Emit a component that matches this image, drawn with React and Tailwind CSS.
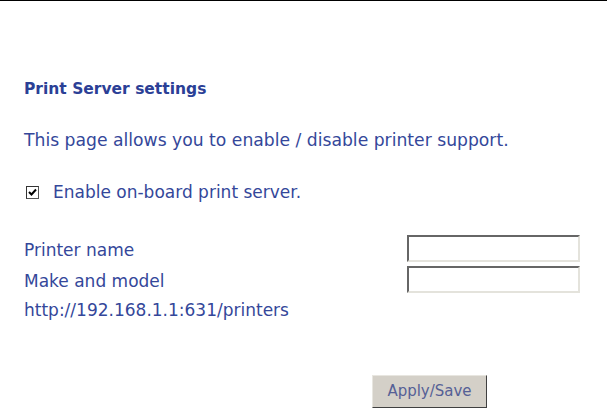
export default function App() {
  return (
    <div
      className="w-[607px] h-[412px] bg-white border-t border-black overflow-hidden text-[#34479a]"
      style={{ fontFamily: '"DejaVu Sans", Verdana, sans-serif' }}
    >
      <div className="pl-[24px] pt-[78px]">
        <h1 className="text-[15.5px] leading-[20px] font-bold text-[#2b4096]">
          Print Server settings
        </h1>

        <p className="mt-[29px] text-[17.2px] leading-[24px]">
          This page allows you to enable / disable printer support.
        </p>

        <label className="mt-[28px] flex items-center gap-[14px] pl-[2px] text-[17px] leading-[24px]">
          <span className="w-[13px] h-[13px] border border-[#555] border-t-[#333] border-l-[#333] bg-white flex items-center justify-center">
            <svg width="9" height="9" viewBox="0 0 9 9">
              <path d="M1 4 L3.5 6.5 L8 1.5" stroke="#000" strokeWidth="2" fill="none" />
            </svg>
          </span>
          Enable on-board print server.
        </label>

        <div className="mt-[31px] grid grid-cols-[383px_173px] gap-y-[4px] text-[17px]">
          <span className="pt-[4px] leading-[23px]">Printer name</span>
          <input className="h-[27px] border-2 border-t-[#666] border-l-[#666] border-b-[#e4e3dc] border-r-[#e4e3dc] bg-white outline-none" />
          <span className="pt-[4px] leading-[23px]">Make and model</span>
          <input className="h-[27px] border-2 border-t-[#666] border-l-[#666] border-b-[#e4e3dc] border-r-[#e4e3dc] bg-white outline-none" />
          <span className="leading-[27px]">http://192.168.1.1:631/printers</span>
        </div>

        <div className="mt-[51px] pl-[348px]">
          <button className="w-[115px] h-[33px] bg-[#d4d0c8] border border-t-[#e8e6e0] border-l-[#e8e6e0] border-b-[#404040] border-r-[#404040] text-[15px] text-[#566096]">
            Apply/Save
          </button>
        </div>
      </div>
    </div>
  );
}
